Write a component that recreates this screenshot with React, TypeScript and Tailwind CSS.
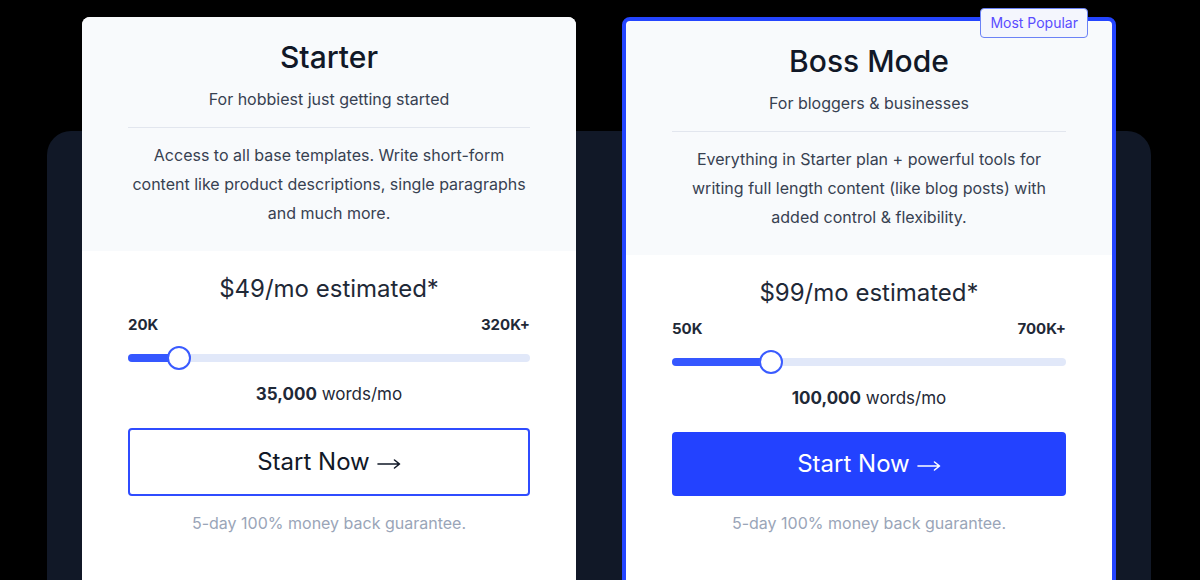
import React from "react";

type Plan = {
  name: string;
  tagline: string;
  desc: string[];
  price: string;
  min: string;
  max: string;
  pct: number;
  words: string;
  featured?: boolean;
};

const plans: Plan[] = [
  {
    name: "Starter",
    tagline: "For hobbiest just getting started",
    desc: [
      "Access to all base templates. Write short-form",
      "content like product descriptions, single paragraphs",
      "and much more.",
    ],
    price: "$49/mo estimated*",
    min: "20K",
    max: "320K+",
    pct: 12.7,
    words: "35,000",
  },
  {
    name: "Boss Mode",
    tagline: "For bloggers & businesses",
    desc: [
      "Everything in Starter plan + powerful tools for",
      "writing full length content (like blog posts) with",
      "added control & flexibility.",
    ],
    price: "$99/mo estimated*",
    min: "50K",
    max: "700K+",
    pct: 25.2,
    words: "100,000",
    featured: true,
  },
];

function Arrow() {
  return (
    <svg width="24" height="12" viewBox="0 0 24 12" fill="none" className="ml-[7px] translate-y-[2px]">
      <path d="M1 6h21.5M17.5 2l5 4-5 4" stroke="currentColor" strokeWidth="1.6" strokeLinecap="round" strokeLinejoin="round" />
    </svg>
  );
}

function Slider({ pct }: { pct: number }) {
  return (
    <div className="relative mt-[11px] flex h-6 items-center">
      <div className="h-2 w-full rounded-full bg-[#e1e8f9]">
        <div className="h-2 rounded-full bg-[#3557ff]" style={{ width: `${pct}%` }} />
      </div>
      <div
        className="absolute top-0 h-6 w-6 -translate-x-1/2 rounded-full border-2 border-[#3a5bff] bg-white"
        style={{ left: `${pct}%` }}
      />
    </div>
  );
}

function PlanCard({ p }: { p: Plan }) {
  return (
    <div
      className={
        p.featured
          ? "relative h-[640px] w-[494px] rounded-lg border-4 border-[#2445ff] bg-white"
          : "relative h-[640px] w-[494px] rounded-lg bg-white"
      }
    >
      {p.featured && (
        <div className="absolute -top-[13px] right-6 rounded border border-[#6b82f6] bg-[#f4f6fd] px-[9px] py-[5px] text-sm leading-[18px] text-[#5a4cff]">
          Most Popular
        </div>
      )}
      <div className="rounded-t-lg bg-[#f8fafc] px-[46px] pt-[22px] pb-[23px] text-center">
        <div className="text-[30px] leading-9 font-medium text-[#111827]">{p.name}</div>
        <div className="mt-3 text-base leading-6 text-[#374151]">{p.tagline}</div>
        <div className="mt-4 h-px bg-[#e2e6ee]" />
        <div className="mt-[13px] text-base leading-[29px] text-[#374151]">
          {p.desc.map((l) => (
            <div key={l}>{l}</div>
          ))}
        </div>
      </div>
      <div className="px-[46px] pt-[23px]">
        <div className="text-center text-2xl leading-[30px] text-[#1f2937]">{p.price}</div>
        <div className="mt-[11px] flex justify-between text-[15px] leading-5 font-bold text-[#1f2937]">
          <span>{p.min}</span>
          <span>{p.max}</span>
        </div>
        <Slider pct={p.pct} />
        <div className="mt-3 text-center text-[17px] leading-6 text-[#1f2937]">
          <span className="font-bold">{p.words}</span> words/mo
        </div>
        <button
          className={
            p.featured
              ? "mt-[22px] flex w-full items-center justify-center rounded bg-[#2342ff] py-4 text-2xl leading-8 text-white"
              : "mt-[22px] flex w-full items-center justify-center rounded border-2 border-[#2f4cff] bg-white py-4 text-2xl leading-8 text-[#111827]"
          }
        >
          Start Now
          <Arrow />
        </button>
        <div className="mt-[15px] text-center text-base leading-6 text-[#9aa5b8]">
          5-day 100% money back guarantee.
        </div>
      </div>
    </div>
  );
}

export default function App() {
  return (
    <div className="h-[580px] overflow-hidden bg-black pr-[49px] pl-[47px] pt-[131px] font-['Inter',sans-serif]">
      <div className="flex h-[600px] flex-col rounded-3xl bg-[#111827] px-[35px]">
        <div className="-mt-[114px] flex justify-between">
          {plans.map((p) => (
            <PlanCard key={p.name} p={p} />
          ))}
        </div>
      </div>
    </div>
  );
}
